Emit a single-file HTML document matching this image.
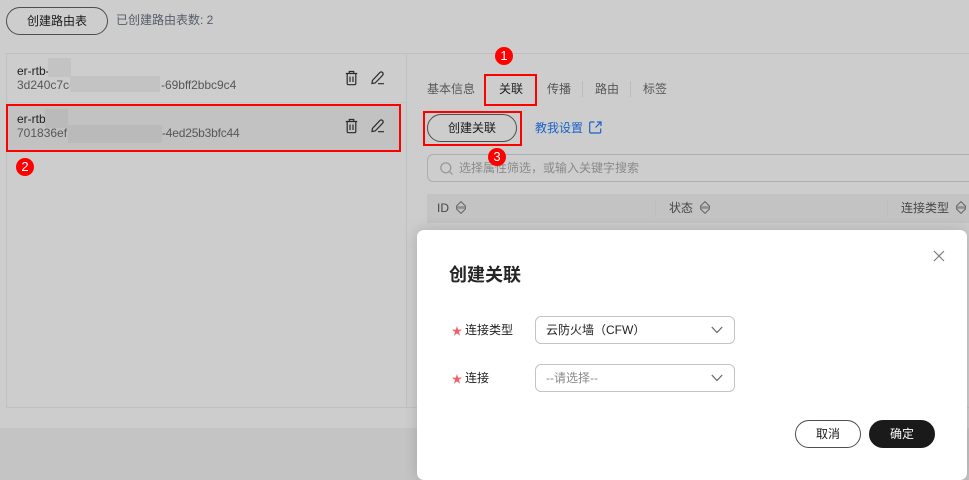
<!DOCTYPE html>
<html lang="zh"><head><meta charset="utf-8"><style>
html,body{margin:0;padding:0}
body{width:969px;height:480px;position:relative;overflow:hidden;background:#cdcdcd;font-family:"Liberation Sans","Noto Sans CJK SC",sans-serif;font-size:12px;color:#1f1f1f}
div,span,svg{position:absolute;box-sizing:border-box}
.t{line-height:16px;height:16px;white-space:nowrap}
.g{color:#575757}
.btn{border:1px solid #4e4e4e;border-radius:15px;text-align:center;color:#1a1a1a}
.blur{background:#c3c3c3}
.red{border:2px solid #f00}
.badge{width:18px;height:18px;border-radius:50%;background:#f00;color:#fff;text-align:center;line-height:18px;font-size:13px}
.sep{width:1px;background:#bcbcbc}
.sel{left:535px;width:200px;height:28px;border:1px solid #c4c4c4;border-radius:6px;background:#fff}
</style></head><body>
<div style="left:0;top:428px;width:969px;height:52px;background:#c4c4c4"></div>
<div class="btn" style="left:6px;top:7px;width:102px;height:28px;line-height:26px">创建路由表</div>
<div class="t" style="left:116px;top:12px;color:#555d68">已创建路由表数: 2</div>

<div style="left:6px;top:53px;width:963px;height:355px;border:1px solid #c0c0c0;border-right:0"></div>
<div style="left:406px;top:53px;width:1px;height:355px;background:#c0c0c0"></div>
<div style="left:7px;top:102px;width:399px;height:1px;background:#c6c6c6"></div>

<div class="t" style="left:17px;top:63px">er-rtb-</div>
<div class="t g" style="left:17px;top:77px">3d240c7c-</div>
<div class="t g" style="left:161px;top:77px;letter-spacing:-.05px">-69bff2bbc9c4</div>
<div class="blur" style="left:48px;top:58px;width:23px;height:19px"></div>
<div class="blur" style="left:70px;top:76px;width:90px;height:16px"></div>

<div style="left:8px;top:106px;width:391px;height:44px;background:#c2c2c2"></div>
<div class="t" style="left:17px;top:111px">er-rtb</div>
<div class="t g" style="left:17px;top:125px">701836ef</div>
<div class="t g" style="left:162px;top:125px;letter-spacing:-.2px">-4ed25b3bfc44</div>
<div class="blur" style="left:45px;top:109px;width:23px;height:19px;background:#bababa"></div>
<div class="blur" style="left:68px;top:125px;width:94px;height:18px;background:#bababa"></div>
<div class="red" style="left:6px;top:104px;width:395px;height:48px"></div>

<svg style="left:344px;top:70px" width="16" height="16" viewBox="0 0 16 16" fill="none" stroke="#2a2a2a" stroke-width="1.2"><path d="M1.800 3.500h11.400M5.300 3.500V1.500h4.400v2M3.200 3.500v10q0 1.200 1.200 1.200h6.200q1.200 0 1.200-1.200v-10M6 6.500v5.500M9 6.500v5.500"/></svg>
<svg style="left:370px;top:70px" width="16" height="16" viewBox="0 0 16 16" fill="none" stroke="#2a2a2a" stroke-width="1.2"><path d="M2 13.500l.4-3L9.800 2.600q1.400-1.300 2.700-.1t.1 2.700L5.200 13zM8 13.700h6"/></svg>
<svg style="left:344px;top:118px" width="16" height="16" viewBox="0 0 16 16" fill="none" stroke="#2a2a2a" stroke-width="1.2"><path d="M1.800 3.500h11.400M5.300 3.500V1.500h4.400v2M3.200 3.500v10q0 1.200 1.200 1.200h6.200q1.200 0 1.200-1.200v-10M6 6.500v5.500M9 6.500v5.500"/></svg>
<svg style="left:370px;top:118px" width="16" height="16" viewBox="0 0 16 16" fill="none" stroke="#2a2a2a" stroke-width="1.2"><path d="M2 13.500l.4-3L9.800 2.600q1.400-1.300 2.700-.1t.1 2.700L5.200 13zM8 13.700h6"/></svg>

<div class="badge" style="left:16px;top:158px">2</div>

<div class="t g" style="left:427px;top:81px">基本信息</div>
<div class="t" style="left:499px;top:81px">关联</div>
<div class="t g" style="left:547px;top:81px">传播</div>
<div class="t g" style="left:595px;top:81px">路由</div>
<div class="t g" style="left:643px;top:81px">标签</div>
<div class="sep" style="left:582px;top:81px;height:16px"></div>
<div class="sep" style="left:630px;top:81px;height:16px"></div>
<div class="red" style="left:484px;top:74px;width:53px;height:32px"></div>
<div class="badge" style="left:495px;top:47px">1</div>

<div class="btn" style="left:427px;top:114px;width:90px;height:28px;line-height:26px">创建关联</div>
<div class="red" style="left:423px;top:111px;width:99px;height:35px"></div>
<div class="t" style="left:535px;top:120px;color:#1a62c9">教我设置</div>
<svg style="left:589px;top:121px" width="13" height="13" viewBox="0 0 13 13" fill="none" stroke="#1a62c9" stroke-width="1.200"><path d="M5.500 1H1.800Q.7 1 .7 2.100v8.800q0 1.100 1.100 1.100h8.800q1.100 0 1.100-1.100V7.500M8 1h4v4M11.800 1.200L6.500 6.500"/></svg>

<div style="left:427px;top:154px;width:560px;height:28px;border:1px solid #aeaeae;border-radius:6px"></div>
<svg style="left:440px;top:162px" width="13" height="13" viewBox="0 0 13 13" fill="none" stroke="#969696" stroke-width="1.200"><circle cx="5.800" cy="5.800" r="5"/><path d="M9.400 9.400l3 3"/></svg>
<div class="t" style="left:459px;top:160px;color:#8a8a8a">选择属性筛选，或输入关键字搜索</div>
<div class="badge" style="left:488px;top:148px">3</div>

<div style="left:427px;top:194px;width:542px;height:29px;background:#c3c3c3"></div>
<div class="t" style="left:437px;top:200px;color:#474747">ID</div>
<svg style="left:456px;top:201px" width="10" height="13" viewBox="0 0 10 13"><path d="M5 .6L9.400 5v3L5 12.400.6 8V5z" fill="none" stroke="#666"/><rect x="1" y="5.200" width="8" height="2.600" fill="#8e8e8e"/></svg>
<div class="sep" style="left:655px;top:200px;height:17px"></div>
<div class="t" style="left:669px;top:200px;color:#474747">状态</div>
<svg style="left:700px;top:201px" width="10" height="13" viewBox="0 0 10 13"><path d="M5 .6L9.400 5v3L5 12.400.6 8V5z" fill="none" stroke="#666"/><rect x="1" y="5.200" width="8" height="2.600" fill="#8e8e8e"/></svg>
<div class="sep" style="left:887px;top:200px;height:17px"></div>
<div class="t" style="left:901px;top:200px;color:#474747">连接类型</div>
<svg style="left:956px;top:201px" width="10" height="13" viewBox="0 0 10 13"><path d="M5 .6L9.400 5v3L5 12.400.6 8V5z" fill="none" stroke="#666"/><rect x="1" y="5.200" width="8" height="2.600" fill="#8e8e8e"/></svg>

<div style="left:417px;top:230px;width:550px;height:250px;background:#fff;border-radius:7px;box-shadow:0 0 14px rgba(0,0,0,.16)"></div>
<div style="left:449px;top:263px;font-size:18px;line-height:24px;font-weight:bold;color:#252525;white-space:nowrap">创建关联</div>
<svg style="left:933px;top:250px" width="12" height="12" viewBox="0 0 12 12" stroke="#7d7d7d" stroke-width="1.200"><path d="M1 1l10 10M11 1L1 11"/></svg>

<svg style="left:452px;top:326px" width="10" height="10" viewBox="0 0 8 8"><path d="M4 0l.9 2.900H8L5.500 4.700l1 3.100L4 5.900 1.500 7.800l1-3.100L0 2.900h3.100z" fill="#f0606a"/></svg>
<div class="t" style="left:465px;top:322px">连接类型</div>
<div class="sel" style="top:316px"></div>
<div class="t" style="left:546px;top:322px">云防火墙（CFW）</div>
<svg style="left:711px;top:326px" width="12" height="8" viewBox="0 0 12 8" fill="none" stroke="#666" stroke-width="1.200"><path d="M.8 1l5.200 5.500L11.200 1"/></svg>

<svg style="left:452px;top:374px" width="10" height="10" viewBox="0 0 8 8"><path d="M4 0l.9 2.900H8L5.500 4.700l1 3.100L4 5.900 1.500 7.800l1-3.100L0 2.900h3.100z" fill="#f0606a"/></svg>
<div class="t" style="left:465px;top:370px">连接</div>
<div class="sel" style="top:364px"></div>
<div class="t" style="left:546px;top:370px;color:#8a8a8a">--请选择--</div>
<svg style="left:711px;top:374px" width="12" height="8" viewBox="0 0 12 8" fill="none" stroke="#666" stroke-width="1.200"><path d="M.8 1l5.200 5.500L11.200 1"/></svg>

<div class="btn" style="left:795px;top:420px;width:66px;height:28px;line-height:26px">取消</div>
<div class="btn" style="left:869px;top:420px;width:66px;height:28px;line-height:26px;background:#1a1a1a;border-color:#1a1a1a;color:#fff">确定</div>
</body></html>
